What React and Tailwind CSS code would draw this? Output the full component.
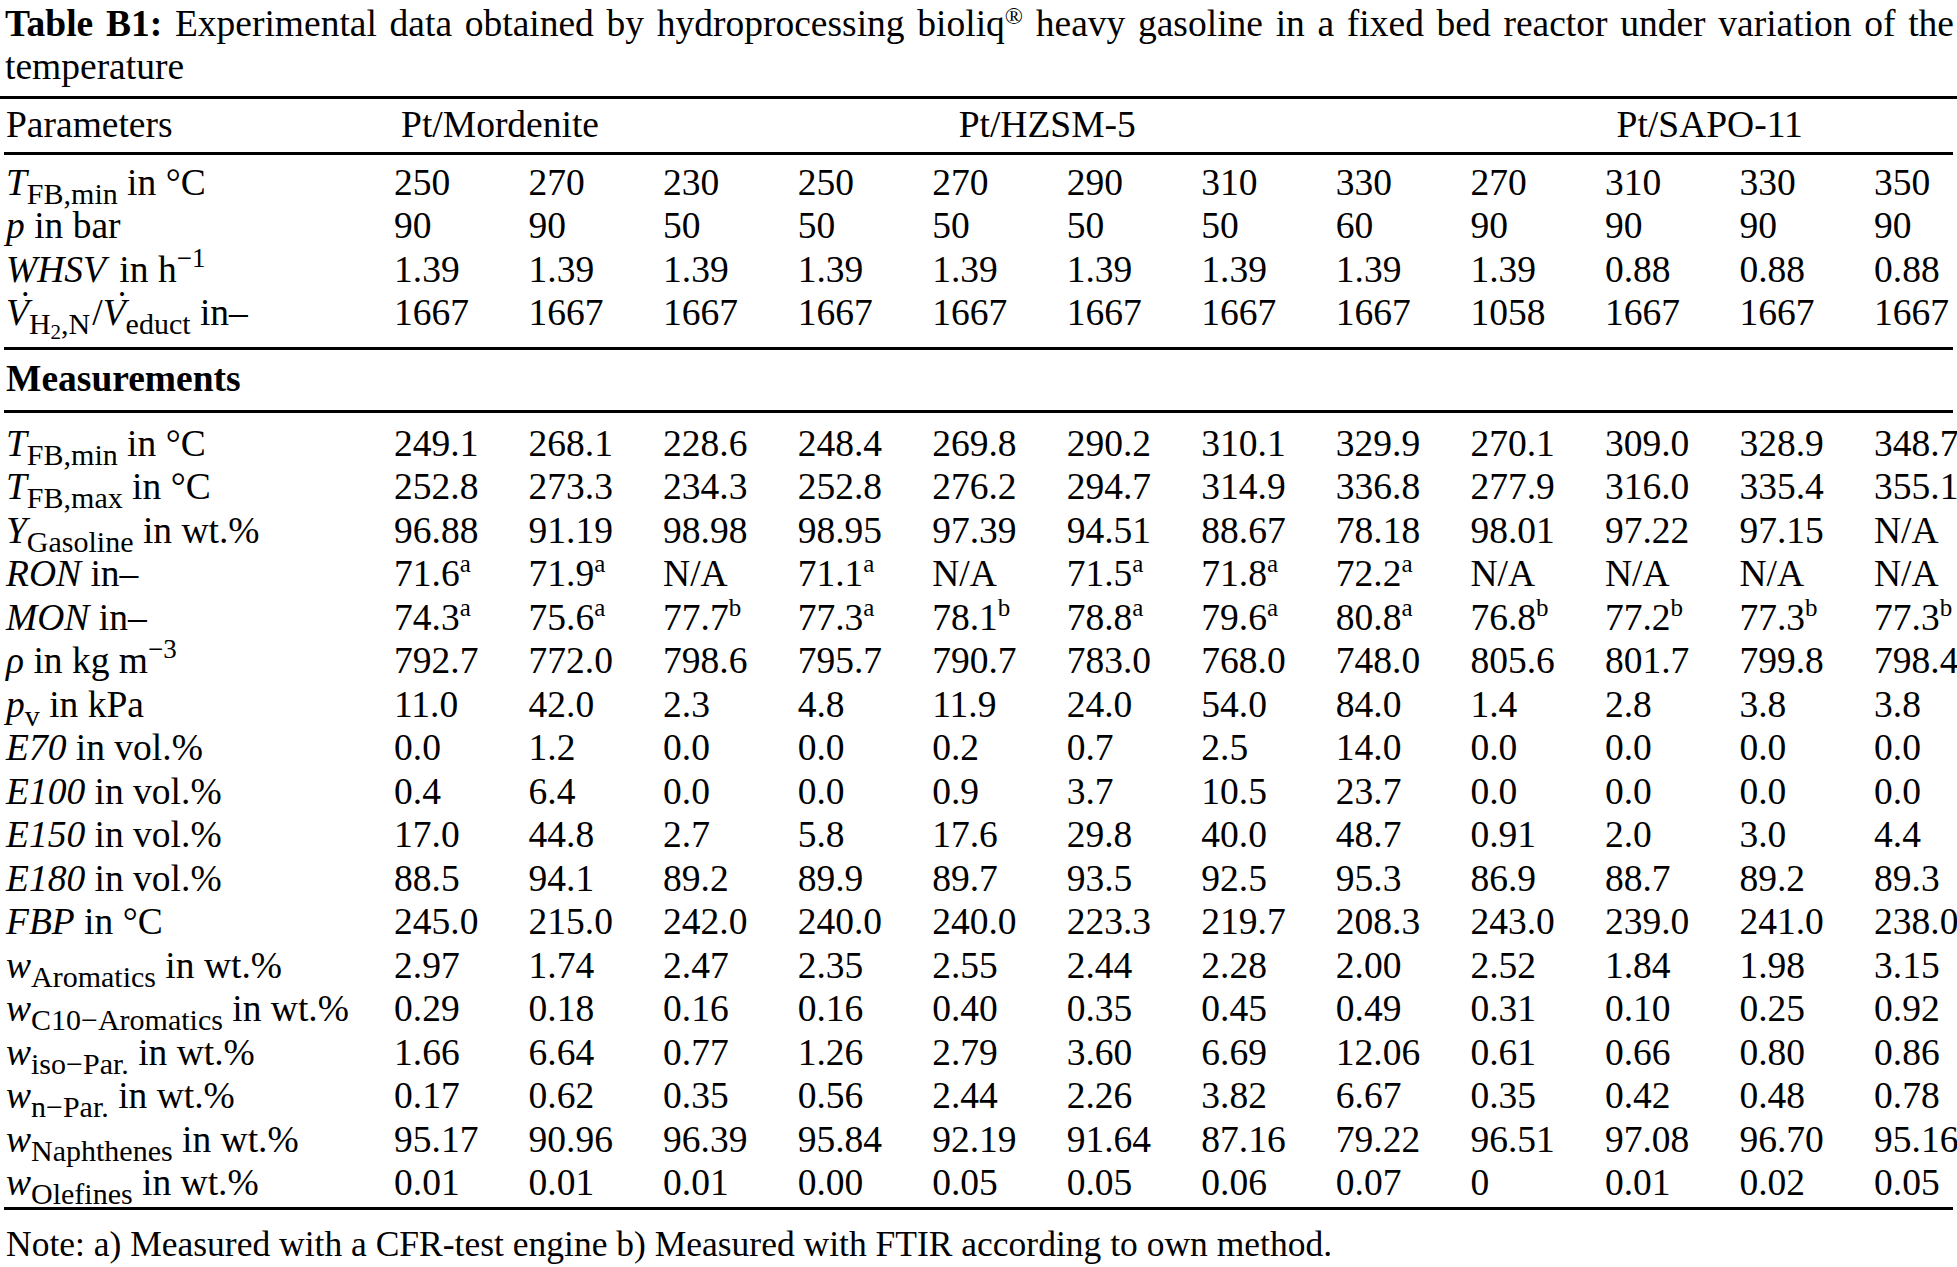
import React from 'react';

// column values: Pt/Mordenite (2), Pt/HZSM-5 (6), Pt/SAPO-11 (4)
const PARAMS = [
  ['250', '270', '230', '250', '270', '290', '310', '330', '270', '310', '330', '350'],
  ['90', '90', '50', '50', '50', '50', '50', '60', '90', '90', '90', '90'],
  ['1.39', '1.39', '1.39', '1.39', '1.39', '1.39', '1.39', '1.39', '1.39', '0.88', '0.88', '0.88'],
  ['1667', '1667', '1667', '1667', '1667', '1667', '1667', '1667', '1058', '1667', '1667', '1667']
];

const MEASUREMENTS = [
  ['249.1', '268.1', '228.6', '248.4', '269.8', '290.2', '310.1', '329.9', '270.1', '309.0', '328.9', '348.7'],
  ['252.8', '273.3', '234.3', '252.8', '276.2', '294.7', '314.9', '336.8', '277.9', '316.0', '335.4', '355.1'],
  ['96.88', '91.19', '98.98', '98.95', '97.39', '94.51', '88.67', '78.18', '98.01', '97.22', '97.15', 'N/A'],
  ['71.6^a', '71.9^a', 'N/A', '71.1^a', 'N/A', '71.5^a', '71.8^a', '72.2^a', 'N/A', 'N/A', 'N/A', 'N/A'],
  ['74.3^a', '75.6^a', '77.7^b', '77.3^a', '78.1^b', '78.8^a', '79.6^a', '80.8^a', '76.8^b', '77.2^b', '77.3^b', '77.3^b'],
  ['792.7', '772.0', '798.6', '795.7', '790.7', '783.0', '768.0', '748.0', '805.6', '801.7', '799.8', '798.4'],
  ['11.0', '42.0', '2.3', '4.8', '11.9', '24.0', '54.0', '84.0', '1.4', '2.8', '3.8', '3.8'],
  ['0.0', '1.2', '0.0', '0.0', '0.2', '0.7', '2.5', '14.0', '0.0', '0.0', '0.0', '0.0'],
  ['0.4', '6.4', '0.0', '0.0', '0.9', '3.7', '10.5', '23.7', '0.0', '0.0', '0.0', '0.0'],
  ['17.0', '44.8', '2.7', '5.8', '17.6', '29.8', '40.0', '48.7', '0.91', '2.0', '3.0', '4.4'],
  ['88.5', '94.1', '89.2', '89.9', '89.7', '93.5', '92.5', '95.3', '86.9', '88.7', '89.2', '89.3'],
  ['245.0', '215.0', '242.0', '240.0', '240.0', '223.3', '219.7', '208.3', '243.0', '239.0', '241.0', '238.0'],
  ['2.97', '1.74', '2.47', '2.35', '2.55', '2.44', '2.28', '2.00', '2.52', '1.84', '1.98', '3.15'],
  ['0.29', '0.18', '0.16', '0.16', '0.40', '0.35', '0.45', '0.49', '0.31', '0.10', '0.25', '0.92'],
  ['1.66', '6.64', '0.77', '1.26', '2.79', '3.60', '6.69', '12.06', '0.61', '0.66', '0.80', '0.86'],
  ['0.17', '0.62', '0.35', '0.56', '2.44', '2.26', '3.82', '6.67', '0.35', '0.42', '0.48', '0.78'],
  ['95.17', '90.96', '96.39', '95.84', '92.19', '91.64', '87.16', '79.22', '96.51', '97.08', '96.70', '95.16'],
  ['0.01', '0.01', '0.01', '0.00', '0.05', '0.05', '0.06', '0.07', '0', '0.01', '0.02', '0.05']
];

// sub/sup shift through vertical-align, line-height 0 keeps the row baseline fixed
const Sub = ({ children }) => (
  <span className="align-[-9px] text-[30px] leading-[0]">{children}</span>
);

const Sup = ({ children }) => (
  <span className="align-[14px] text-[25px] leading-[0]">{children}</span>
);

const UnitSup = ({ children }) => (
  <span className="align-[15px] text-[27px] leading-[0]">{children}</span>
);

const I = ({ children }) => <span className="italic">{children}</span>;

// V with a time-derivative dot on top
const VDot = () => (
  <span className="relative italic">
    V
    <span className="absolute left-[13px] -top-[9px] not-italic">˙</span>
  </span>
);

const PARAM_LABELS = [
  <><I>T</I><Sub>FB,min</Sub> in °C</>,
  <><I>p</I> in bar</>,
  <><I>WHSV</I><span className="ml-[4px]"> in h</span><UnitSup>−1</UnitSup></>,
  <>
    <VDot />
    <Sub>H<span className="align-[-5px] text-[21px]">2</span>,N</Sub>
    <span className="ml-[2px]">/</span>
    <VDot />
    <Sub>educt</Sub> in–
  </>
];

const MEAS_LABELS = [
  <><I>T</I><Sub>FB,min</Sub> in °C</>,
  <><I>T</I><Sub>FB,max</Sub> in °C</>,
  <><I>Y</I><Sub>Gasoline</Sub> in wt.%</>,
  <><I>RON</I> in–</>,
  <><I>MON</I> in–</>,
  <><I>ρ</I> in kg m<UnitSup>−3</UnitSup></>,
  <><I>p</I><Sub>v</Sub> in kPa</>,
  <><I>E70</I> in vol.%</>,
  <><I>E100</I> in vol.%</>,
  <><I>E150</I> in vol.%</>,
  <><I>E180</I> in vol.%</>,
  <><I>FBP</I> in °C</>,
  <><I>w</I><Sub>Aromatics</Sub> in wt.%</>,
  <><I>w</I><Sub>C10−Aromatics</Sub> in wt.%</>,
  <><I>w</I><Sub>iso−Par.</Sub> in wt.%</>,
  <><I>w</I><Sub>n−Par.</Sub> in wt.%</>,
  <><I>w</I><Sub>Naphthenes</Sub> in wt.%</>,
  <><I>w</I><Sub>Olefines</Sub> in wt.%</>
];

const GRID = 'grid grid-cols-[394px_repeat(11,134.55px)_1fr]';

function Cell({ value }) {
  const [num, mark] = value.split('^');
  return (
    <div className="whitespace-nowrap">
      {num}
      {mark && <Sup>{mark}</Sup>}
    </div>
  );
}

function DataRow({ label, values }) {
  return (
    <div className={`${GRID} h-[43.5px] leading-[43.5px]`}>
      <div className="pl-[6px] whitespace-nowrap">{label}</div>
      {values.map((v, i) => <Cell key={i} value={v} />)}
    </div>
  );
}

export default function App() {
  return (
    <div className="flex h-[1267px] w-[1957px] flex-col overflow-hidden bg-white font-['Liberation_Serif','Times_New_Roman',serif] text-[37.5px] text-black">
      {/* Caption */}
      <p className="pt-[2px] pl-[5px] pr-[3px] text-justify leading-[43px]">
        <span className="font-bold">Table B1:</span> Experimental data obtained by hydroprocessing bioliq
        <span className="align-[12px] text-[24px] leading-[0]">®</span> heavy gasoline in a fixed bed reactor under variation of the temperature
      </p>

      <div className="mx-[4px] mt-[8px] flex flex-col">
        {/* Catalyst header */}
        <div className={`${GRID} -mx-[4px] border-t-[3px] border-black pt-[3.5px] pb-[6px]`}>
          <div className="h-[43.5px] pl-[6px] leading-[43.5px]">Parameters</div>
          <div className="col-span-2 pr-[57px] text-center leading-[43.5px]">Pt/Mordenite</div>
          <div className="col-span-6 pr-[39px] text-center leading-[43.5px]">Pt/HZSM-5</div>
          <div className="col-span-4 pr-[8px] text-center leading-[43.5px]">Pt/SAPO-11</div>
        </div>

        <div className="border-t-[3px] border-black pt-[5.5px] pb-[12px]">
          <div className="-mx-[4px]">
            {PARAMS.map((vals, i) => <DataRow key={i} label={PARAM_LABELS[i]} values={vals} />)}
          </div>
        </div>

        <div className="border-t-[3px] border-black pt-[7px] pb-[10px]">
          <div className="h-[43.5px] pl-[2px] font-bold leading-[43.5px]">Measurements</div>
        </div>

        <div className="border-y-[3px] border-black pt-[8.5px] pb-[2.5px]">
          <div className="-mx-[4px]">
            {MEASUREMENTS.map((vals, i) => <DataRow key={i} label={MEAS_LABELS[i]} values={vals} />)}
          </div>
        </div>
      </div>

      <p className="mt-[13px] pl-[6px] text-[35.5px] leading-[43.5px]">
        Note: a) Measured with a CFR-test engine b) Measured with FTIR according to own method.
      </p>
    </div>
  );
}
